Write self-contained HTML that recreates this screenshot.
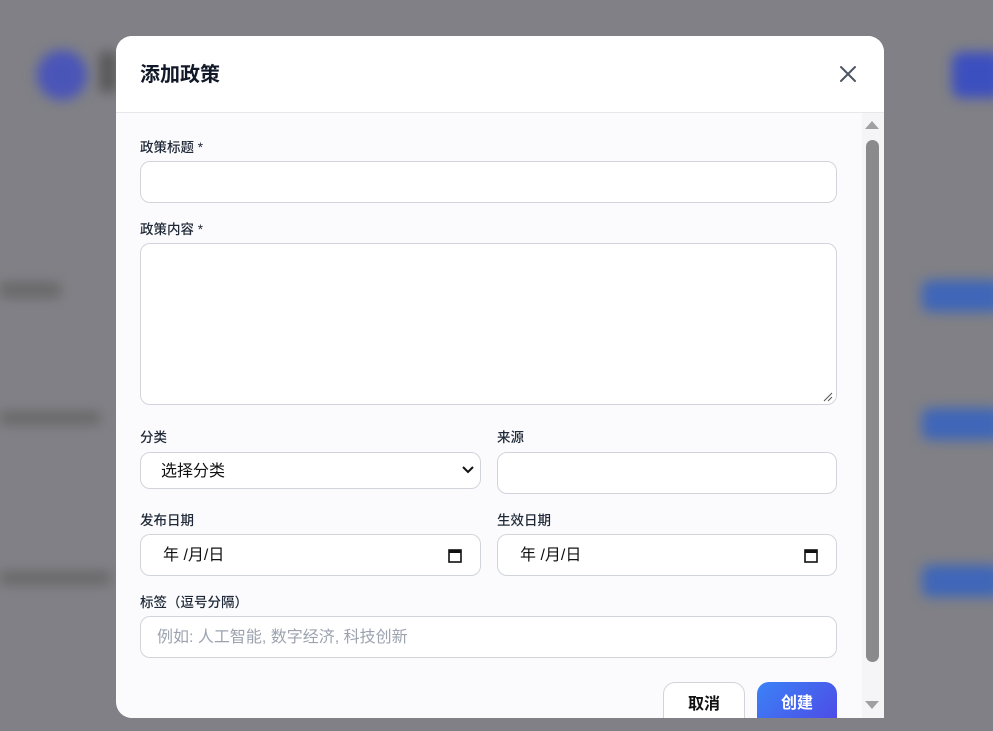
<!DOCTYPE html>
<html><head><meta charset="utf-8"><style>
*{box-sizing:border-box;margin:0;padding:0}
body{width:993px;height:731px;overflow:hidden;background:#808086;font-family:"Liberation Sans","Noto Sans CJK SC",sans-serif;position:relative}
.bg{position:absolute;filter:blur(6px)}
.modal{position:absolute;left:116px;top:36px;width:768px;height:682px;background:#fbfbfd;border-radius:16px 16px 0 16px;overflow:hidden}
.hdr{height:77px;border-bottom:1px solid #e5e7eb;background:#fff;position:relative}
.hdr h2{position:absolute;left:24px;top:22px;font-size:20px;font-weight:700;color:#111827}
.x{position:absolute;right:26px;top:28px;width:20px;height:20px}
.lbl{position:absolute;left:24px;font-size:13.5px;color:#1f2937;font-weight:500}
.in{position:absolute;border:1px solid #d1d5db;border-radius:10px;background:#fff;font-size:16px;color:#111}
.sb{position:absolute;left:746px;top:77px;width:22px;height:605px;background:#f5f5f7}
.thumb{position:absolute;left:750px;top:104px;width:13px;height:522px;background:#8a8a8d;border-radius:7px}
.btn{position:absolute;top:646px;height:50px;border-radius:12px;font-size:16px;font-weight:700;text-align:center;line-height:44px}
</style></head><body>
<div class="bg" style="left:37px;top:50px;width:50px;height:50px;border-radius:50%;background:#4a55b8"></div>
<div class="bg" style="left:100px;top:52px;width:16px;height:40px;background:#555"></div>
<div class="bg" style="left:952px;top:52px;width:50px;height:46px;border-radius:10px;background:#3c4fbf"></div>
<div class="bg" style="left:0px;top:283px;width:60px;height:14px;background:#666"></div>
<div class="bg" style="left:0px;top:412px;width:100px;height:12px;background:#666"></div>
<div class="bg" style="left:0px;top:572px;width:110px;height:12px;background:#666"></div>
<div class="bg" style="left:922px;top:280px;width:80px;height:32px;border-radius:8px;background:#3f66b8"></div>
<div class="bg" style="left:922px;top:408px;width:80px;height:32px;border-radius:8px;background:#3f66b8"></div>
<div class="bg" style="left:922px;top:565px;width:80px;height:32px;border-radius:8px;background:#3f66b8"></div>
<div class="modal">
<div class="hdr"><h2>添加政策</h2>
<svg class="x" viewBox="0 0 20 20"><path d="M3 3L17 17M17 3L3 17" stroke="#4b5563" stroke-width="2" fill="none" stroke-linecap="round"/></svg></div>
<div class="sb"></div>
<svg style="position:absolute;left:749px;top:85px" width="14" height="9"><path d="M0 8L7 0L14 8Z" fill="#a0a0a3"/></svg>
<svg style="position:absolute;left:749px;top:665px" width="14" height="9"><path d="M0 0L7 8L14 0Z" fill="#a0a0a3"/></svg>
<div class="thumb"></div>
<div class="lbl" style="top:100px">政策标题 *</div>
<div class="in" style="left:24px;top:125px;width:697px;height:42px"></div>
<div class="lbl" style="top:182px">政策内容 *</div>
<div class="in" style="left:24px;top:207px;width:697px;height:162px"></div>
<svg style="position:absolute;left:706px;top:355px" width="12" height="12"><path d="M2 10L10 2M6 10L10 6" stroke="#555" stroke-width="1"/></svg>
<div class="lbl" style="top:390px">分类</div>
<div class="in" style="left:24px;top:416px;width:341px;height:37px;padding:4px 20px">选择分类
<svg style="position:absolute;right:6px;top:13px" width="12" height="8"><path d="M1 1L6 6L11 1" stroke="#111" stroke-width="2" fill="none"/></svg></div>
<div class="lbl" style="left:381px;top:390px">来源</div>
<div class="in" style="left:381px;top:416px;width:340px;height:42px"></div>
<div class="lbl" style="top:473px">发布日期</div>
<div class="in" style="left:24px;top:498px;width:341px;height:42px;padding:6px 22px">年 /月/日
<svg style="position:absolute;right:18px;top:13px" width="14" height="15"><rect x="1" y="2" width="12" height="12" fill="none" stroke="#111" stroke-width="1.6"/><rect x="1" y="2" width="12" height="3" fill="#111"/></svg></div>
<div class="lbl" style="left:381px;top:473px">生效日期</div>
<div class="in" style="left:381px;top:498px;width:340px;height:42px;padding:6px 22px">年 /月/日
<svg style="position:absolute;right:18px;top:13px" width="14" height="15"><rect x="1" y="2" width="12" height="12" fill="none" stroke="#111" stroke-width="1.6"/><rect x="1" y="2" width="12" height="3" fill="#111"/></svg></div>
<div class="lbl" style="top:555px">标签（逗号分隔）</div>
<div class="in" style="left:24px;top:580px;width:697px;height:42px;padding:6px 16px;color:#9ca3af">例如: 人工智能, 数字经济, 科技创新</div>
<div class="btn" style="left:547px;width:82px;border:1px solid #d1d5db;background:#fff;color:#111">取消</div>
<div class="btn" style="left:641px;width:80px;background:linear-gradient(135deg,#3b82f6,#4f46e5);color:#fff">创建</div>
</div>
</body></html>
